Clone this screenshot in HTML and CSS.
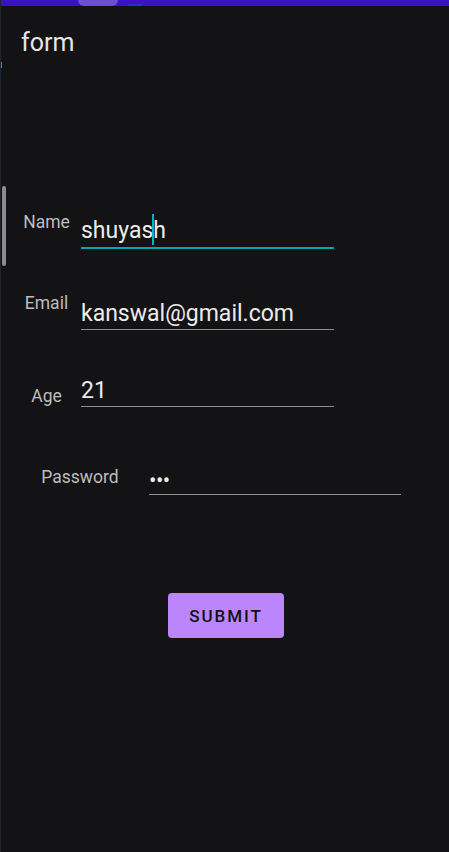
FILE: index.html
```html
<!DOCTYPE html>
<html>
<head>
<meta charset="utf-8">
<link rel="stylesheet" href="styles.css">
</head>
<body>
<div class="app">
  <div class="statusbar">
    <div class="pill"></div>
    <div class="blip"></div>
  </div>
  <div class="edge-mark"></div>
  <header class="toolbar">
    <h1 class="title">form</h1>
  </header>
  <div class="scroll-indicator"></div>
  <main class="form">
    <div class="row row-name">
      <label class="label label-short">Name</label>
      <div class="field field-focused"><span class="value">shuyas<span class="cursor"></span>h</span></div>
    </div>
    <div class="row row-email">
      <label class="label label-short">Email</label>
      <div class="field"><span class="value">kanswal@gmail.com</span></div>
    </div>
    <div class="row row-age">
      <label class="label label-short">Age</label>
      <div class="field"><span class="value">21</span></div>
    </div>
    <div class="row row-password">
      <label class="label label-long">Password</label>
      <div class="field field-wide"><span class="value dots">•••</span></div>
    </div>
    <div class="actions">
      <button class="submit">SUBMIT</button>
    </div>
  </main>
</div>
</body>
</html>
```

FILE: styles.css
```css
* { box-sizing: border-box; }
html, body { margin: 0; padding: 0; }
body {
  background: #131315;
  font-family: Roboto, "Noto Sans", sans-serif;
  color: #e8e8e8;
}
.app {
  position: relative;
  width: 449px;
  height: 852px;
  border-left: 1px solid #1c2731;
  overflow: hidden;
}
.statusbar {
  height: 6px;
  background: #3b12c1;
  display: flex;
  align-items: flex-end;
}
.pill {
  margin-left: 77px;
  width: 40px;
  height: 6px;
  background: #6a4ed6;
  border-radius: 0 0 20px 20px;
}
.blip {
  margin-left: 10px;
  width: 14px;
  height: 2px;
  background: #1f33c4;
}
.edge-mark {
  position: absolute;
  left: -1px;
  top: 62px;
  width: 2px;
  height: 6px;
  background: #c0603a;
}
.toolbar {
  height: 74px;
  padding-left: 20px;
  padding-top: 23px;
}
.title {
  margin: 0;
  font-size: 25px;
  font-weight: 400;
  line-height: 28px;
  color: #e6e6e6;
}
.scroll-indicator {
  position: absolute;
  left: 1px;
  top: 186px;
  width: 4px;
  height: 80px;
  border-radius: 2px;
  background: #8c8c8c;
}
.form {
  padding-top: 132px;
}
.row {
  display: flex;
  align-items: flex-start;
}
.label {
  font-size: 17.5px;
  line-height: 20px;
  color: #bdbdbd;
  text-align: center;
}
.label-short {
  width: 80px;
  padding-left: 11px;
}
.label-long {
  width: 148px;
  padding-left: 10px;
}
.field {
  width: 253px;
  border-bottom: 1.5px solid #8f8f8f;
  padding-top: 2px;
  padding-bottom: 2px;
}
.field-wide { width: 252px; }
.field-focused {
  border-bottom: 2px solid #00a9b6;
}
.value {
  display: inline-block;
  font-size: 23px;
  line-height: 26px;
  color: #ececec;
  position: relative;
}
.cursor {
  display: inline-block;
  width: 2px;
  height: 31px;
  margin: 0 -1px;
  vertical-align: -7px;
  background: #00b3c0;
}
.dots {
  font-size: 22px;
  letter-spacing: -0.5px;
  position: relative;
  top: 2px;
}
.row-name { margin-top: 0; }
.row-name .label { margin-top: 0; }
.row-email { margin-top: 50px; }
.row-email .label { margin-top: -6px; }
.row-age { margin-top: 46px; }
.row-age .label { margin-top: 10px; }
.row-password { margin-top: 57px; }
.row-password .label { margin-top: 3px; }
.actions {
  display: flex;
  padding-left: 167px;
  margin-top: 98px;
}
.submit {
  width: 116px;
  height: 45px;
  border: none;
  border-radius: 4px;
  background: #bb86fc;
  color: #111;
  font-family: Roboto, sans-serif;
  font-weight: 500;
  font-size: 17px;
  letter-spacing: 1.9px;
}
```
